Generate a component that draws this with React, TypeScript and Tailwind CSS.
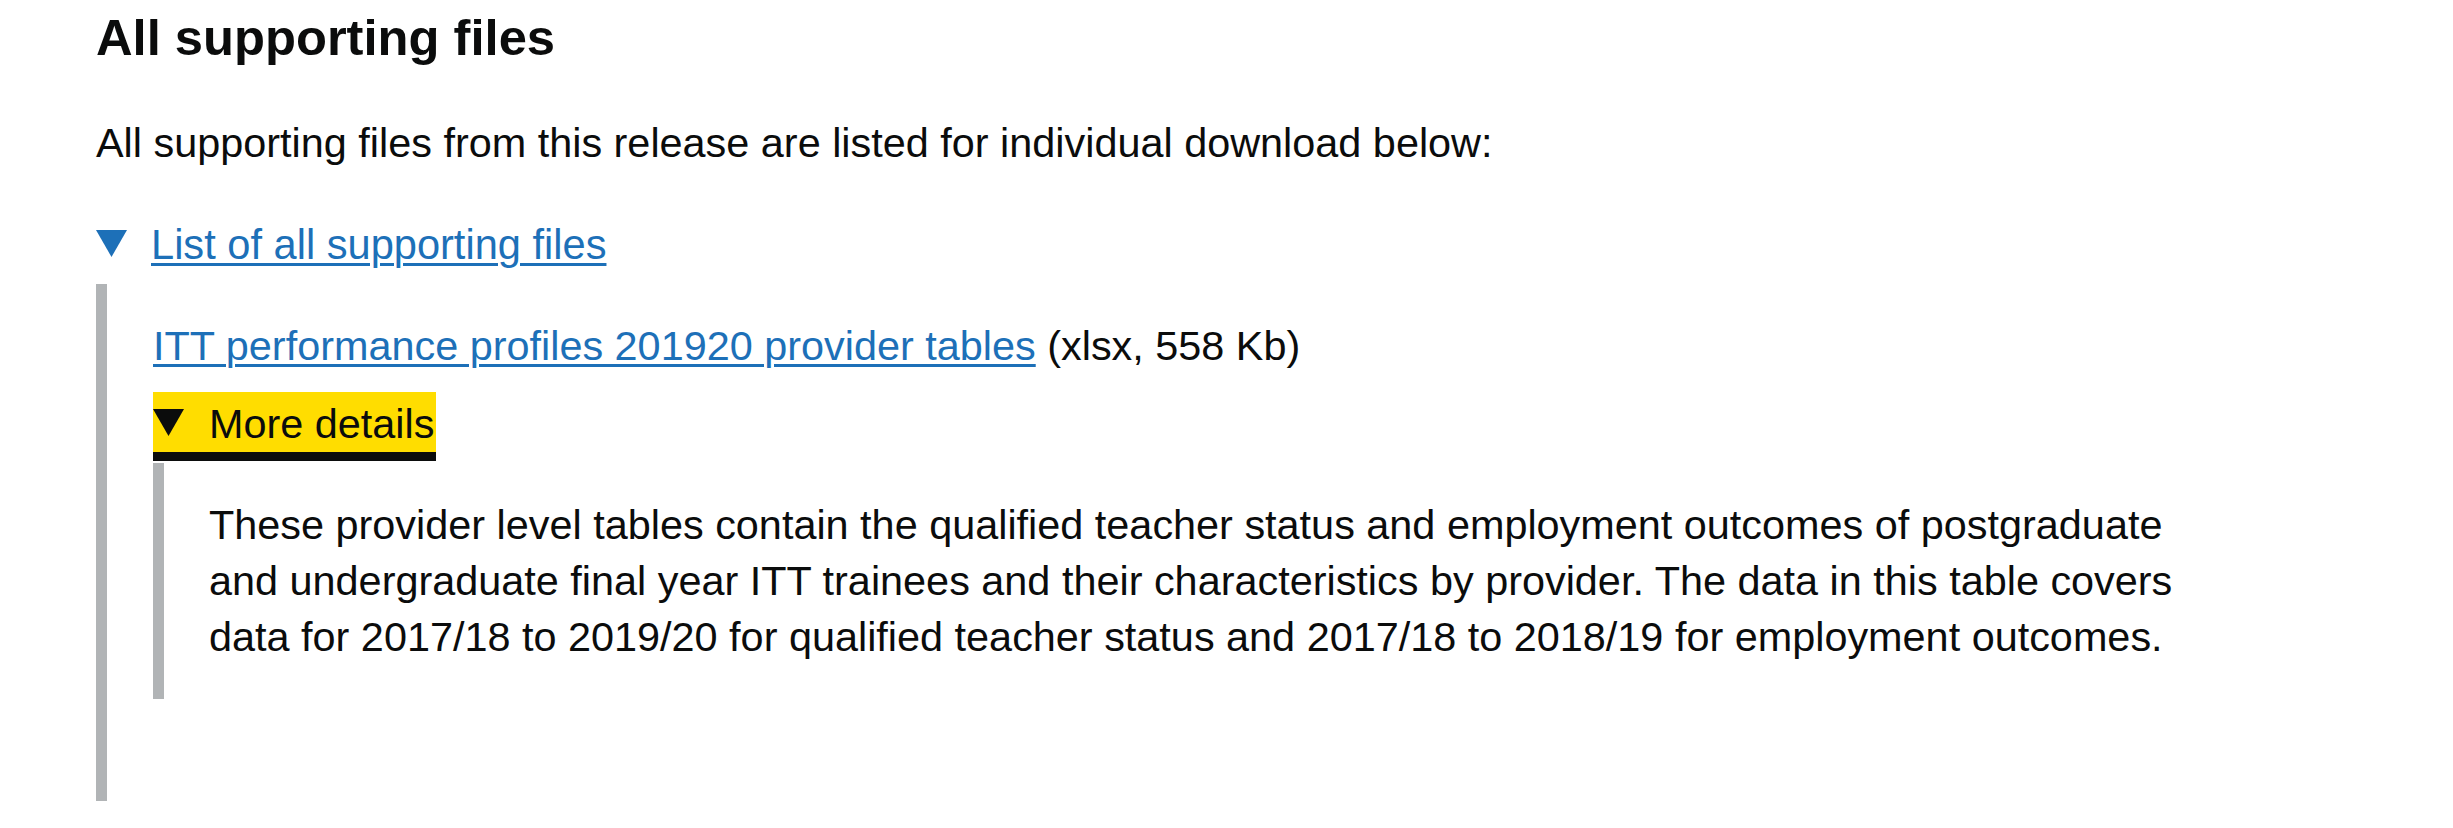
const Triangle = ({ color }: { color: string }) => (
  <svg
    width="31"
    height="27"
    viewBox="0 0 31 27"
    className="mt-[13px] shrink-0"
    aria-hidden="true"
  >
    <polygon points="0,0 31,0 15.5,27" fill={color} />
  </svg>
);

const App = () => {
  return (
    <div className="min-h-screen bg-white pl-[96px] pt-[8px] text-[#0b0c0c] font-['Liberation_Sans',Arial,sans-serif]">
      {/* Heading and intro */}
      <h2 className="text-[50.7px] font-bold leading-[60px]">All supporting files</h2>
      <p className="mt-[47px] text-[41.4px] leading-[56px]">
        All supporting files from this release are listed for individual download below:
      </p>

      {/* Outer details */}
      <div className="mt-[46px]">
        <div className="mb-[11px] flex items-start">
          <Triangle color="#1d70b8" />
          <a
            href="#"
            className="ml-[24px] text-[41.6px] leading-[56px] text-[#1d70b8] underline decoration-[3px] underline-offset-[4px]"
          >
            List of all supporting files
          </a>
        </div>

        <div className="border-l-[11px] border-[#b1b4b6] pl-[46px] pt-[34px] pb-[34px]">
          <p className="text-[41.4px] leading-[56px]">
            <a
              href="#"
              className="text-[#1d70b8] underline decoration-[3px] underline-offset-[4px]"
            >
              ITT performance profiles 201920 provider tables
            </a>{' '}
            (xlsx, 558 Kb)
          </p>

          {/* Inner details, focused summary */}
          <div className="mt-[22px] mb-[68px]">
            <div className="mb-[11px] inline-flex items-start bg-[#ffdd00] pr-[2px] shadow-[0_-4px_0_#ffdd00,0_9px_0_#0b0c0c]">
              <Triangle color="#0b0c0c" />
              <span className="ml-[25px] text-[41.4px] leading-[56px]">More details</span>
            </div>
            <div className="border-l-[11px] border-[#b1b4b6] pl-[45px] py-[34px] text-[41.4px] leading-[56px] whitespace-nowrap">
              These provider level tables contain the qualified teacher status and employment outcomes of postgraduate
              <br />
              and undergraduate final year ITT trainees and their characteristics by provider. The data in this table covers
              <br />
              data for 2017/18 to 2019/20 for qualified teacher status and 2017/18 to 2018/19 for employment outcomes.
            </div>
          </div>
        </div>
      </div>
    </div>
  );
};

export default App;
